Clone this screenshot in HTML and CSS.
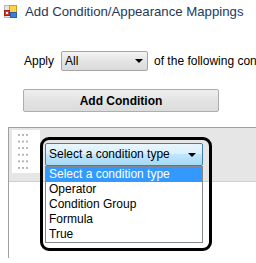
FILE: index.html
```html
<!DOCTYPE html>
<html lang="en">
<head>
  <meta charset="UTF-8" />
  <title>Add Condition/Appearance Mappings</title>
  <link rel="stylesheet" href="styles.css">
</head>
<body>

<header class="title">
  <svg class="app-icon" width="13" height="13" viewBox="0 0 13 13">
    <rect x="0.5" y="0.5" width="12" height="12" fill="#e4e4e4" stroke="#b8b8b8"/>
    <rect x="5.5" y="0.5" width="7" height="7" fill="#fbd24a" stroke="#d89a1c"/>
    <rect x="0.5" y="5.5" width="5" height="5" fill="#d83a30" stroke="#a42218"/>
    <rect x="2" y="7" width="2" height="2" fill="#fff"/>
    <rect x="6.5" y="7.5" width="6" height="5" fill="#3b7fd9" stroke="#2a5fa8"/>
  </svg>
  <span>Add Condition/Appearance Mappings</span>
</header>

<div class="apply-row">
  <label>Apply</label>
  <div class="combo">
    <span>All</span>
    <i class="arrow"></i>
  </div>
  <span class="tail">of the following conditions</span>
</div>

<button class="add-btn">Add Condition</button>

<section class="rows">
  <div class="row">
    <div class="grip"></div>
    <div class="callout">
      <div class="combo combo-hot">
        <span>Select a condition type</span>
        <i class="arrow"></i>
      </div>
      <ul class="drop-list">
        <li class="selected">Select a condition type</li>
        <li>Operator</li>
        <li>Condition Group</li>
        <li>Formula</li>
        <li>True</li>
      </ul>
    </div>
  </div>
</section>

</body>
</html>
```

FILE: styles.css
```css
body {
  margin: 0;
  font-family: 'Liberation Sans', Arial, sans-serif;
  font-size: 12px;
  color: #000;
  background: #fff;
  width: 256px;
  height: 263px;
  overflow: hidden;
}

.title {
  height: 22px;
  display: flex;
  align-items: center;
  gap: 8px;
  padding-left: 4px;
  font-size: 13.2px;
  color: #1e395b;
  white-space: nowrap;
}

.app-icon {
  flex: none;
}

.apply-row {
  display: flex;
  align-items: center;
  margin-top: 29px;
  padding-left: 24px;
  white-space: nowrap;
  overflow: hidden;
}

.apply-row label {
  margin-right: 7px;
}

.apply-row .tail {
  margin-left: 6px;
}

.combo {
  position: relative;
  box-sizing: border-box;
  width: 87px;
  height: 20px;
  line-height: 18px;
  padding-left: 3px;
  border: 1px solid #a5a5a5;
  border-radius: 2px;
  background: linear-gradient(#f4f4f4, #e4e4e4 50%, #dadada);
  flex: none;
}

.arrow {
  position: absolute;
  right: 4px;
  top: 50%;
  margin-top: -2px;
  border-left: 4px solid transparent;
  border-right: 4px solid transparent;
  border-top: 4px solid #000;
}

.add-btn {
  display: block;
  box-sizing: border-box;
  margin: 18px 0 0 23px;
  width: 196px;
  height: 23px;
  border: 1px solid #adadad;
  border-radius: 2px;
  background: linear-gradient(#efefef, #e3e3e3 50%, #dcdcdc);
  font-family: inherit;
  font-size: 12px;
  font-weight: bold;
  color: #000;
  padding: 0;
}

.rows {
  box-sizing: border-box;
  margin: 15px 0 0 8px;
  height: 131px;
  border-top: 1px solid #a0a0a0;
  border-left: 1px solid #a0a0a0;
}

.row {
  display: flex;
  align-items: flex-start;
  height: 51px;
  padding: 2px 0 0 3px;
  background: #e6e6e6;
  border-bottom: 1px solid #cfcfcf;
}

/* white strip with the drag dots */
.grip {
  flex: none;
  width: 28px;
  height: 43px;
  background-color: #fff;
  background-image:
    linear-gradient(to right, #fff 6px, transparent 6px, transparent 18px, #fff 18px),
    radial-gradient(circle at 1px 1px, #b4b4b4 0.9px, transparent 1.1px);
  background-size: 100% 100%, 4px 6.6px;
  background-position: 0 0, 6px 4px;
}

.callout {
  flex: none;
  width: 162px;
  margin-top: 7px;
  padding: 3px 2px 5px 2px;
  border: 3px solid #000;
  border-radius: 9px;
}

.combo-hot {
  width: 158px;
  height: 23px;
  line-height: 21px;
  border-color: #3c7fb1;
  background: linear-gradient(#eaf6fd, #d9f0fc 45%, #bee6fd 50%, #a7d9f5);
  padding-left: 3px;
}

.combo-hot .arrow {
  right: 6px;
}

.drop-list {
  list-style: none;
  margin: 0;
  padding: 0;
  width: 158px;
  box-sizing: border-box;
  border: 1px solid #828790;
  background: #fff;
}

.drop-list li {
  height: 15px;
  line-height: 15px;
  padding-left: 3px;
}

.drop-list li.selected {
  background: #3399ff;
  color: #fff;
}
```
